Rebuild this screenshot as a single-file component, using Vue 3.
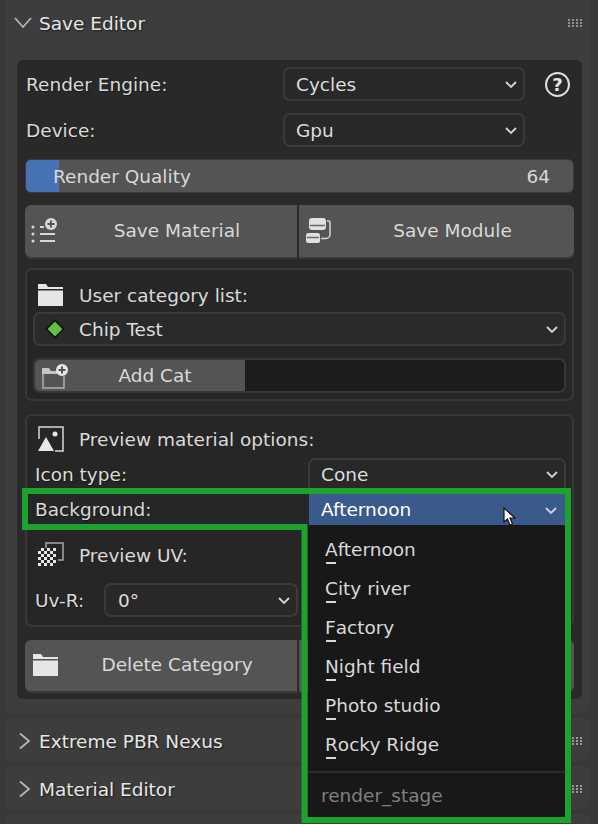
<script setup>
const menuItems = [
  ['A', 'fternoon'],
  ['C', 'ity river'],
  ['F', 'actory'],
  ['N', 'ight field'],
  ['P', 'hoto studio'],
  ['R', 'ocky Ridge'],
]
const collapsed = ['Extreme PBR Nexus', 'Material Editor']
</script>

<template>
  <div class="app">
    <section class="panel open">
      <header class="panel-head">
        <svg class="arrow" width="20" height="20" viewBox="0 0 20 20"><polyline points="2,5 10,14 18,5" /></svg>
        <span class="title">Save Editor</span>
        <svg class="grip" width="16" height="8" viewBox="0 0 16 8"><g fill="#8f8f8f"><rect v-for="n in 4" :key="n" :x="(n-1)*4" y="0" width="2" height="2"/><rect v-for="n in 4" :key="'b'+n" :x="(n-1)*4" y="3" width="2" height="2"/><rect v-for="n in 4" :key="'c'+n" :x="(n-1)*4" y="6" width="2" height="2"/></g></svg>
      </header>

      <div class="body">
        <div class="row">
          <span class="label w258">Render Engine:</span>
          <div class="select w242"><span>Cycles</span><svg class="chev" width="12" height="8" viewBox="0 0 12 8"><polyline points="1,1 6,6 11,1"/></svg></div>
          <span class="help">?</span>
        </div>
        <div class="row">
          <span class="label w258">Device:</span>
          <div class="select w242"><span>Gpu</span><svg class="chev" width="12" height="8" viewBox="0 0 12 8"><polyline points="1,1 6,6 11,1"/></svg></div>
        </div>

        <div class="slider">
          <div class="fill"></div>
          <span class="s-label">Render Quality</span>
          <span class="s-value">64</span>
        </div>

        <div class="btn-row">
          <div class="btn first">
            <svg class="btn-icon" width="26" height="30" viewBox="0 0 26 30">
              <g fill="#d8d8d8">
                <circle cx="2" cy="12" r="1.500"/><circle cx="2" cy="19" r="1.500"/><circle cx="2" cy="26" r="1.500"/>
                <rect x="9" y="11" width="4" height="2"/><rect x="9" y="18" width="15" height="2"/><rect x="9" y="25" width="15" height="2"/>
                <circle cx="20" cy="9" r="6"/>
              </g>
              <path d="M20 5.500v7M16.500 9h7" stroke="#545454" stroke-width="2"/>
            </svg>
            <span class="btn-text">Save Material</span>
          </div>
          <div class="btn second">
            <svg class="btn-icon" width="26" height="30" viewBox="0 0 26 30">
              <g fill="#e0e0e0">
                <rect x="3" y="3" width="17" height="12" rx="3"/>
                <rect x="0" y="18" width="14" height="10" rx="2.500"/>
              </g>
              <path d="M4 10.500h15M1 22.500h12" stroke="#6a6a6a" stroke-width="1.500"/>
              <path d="M21 6h1.500a1.500 1.500 0 0 1 1.500 1.500v12a4 4 0 0 1-4 4h-5" fill="none" stroke="#d8d8d8" stroke-width="1.500"/>
            </svg>
            <span class="btn-text">Save Module</span>
          </div>
        </div>

        <div class="box box-cat">
          <div class="box-head">
            <svg class="head-icon" width="26" height="24" viewBox="0 0 26 24"><path d="M0 1h8l2 3h15v2H0zM0 7.500h25V23H0z" fill="#e6e6e6"/></svg>
            <span>User category list:</span>
          </div>
          <div class="select full">
            <svg class="diamond" width="20" height="20" viewBox="0 0 20 20"><path d="M10 1.500L18.500 10L10 18.500L1.500 10z" fill="#62c23c" stroke="#0c0c0c" stroke-width="1.500"/></svg>
            <span class="grow">Chip Test</span>
            <svg class="chev" width="12" height="8" viewBox="0 0 12 8"><polyline points="1,1 6,6 11,1"/></svg>
          </div>
          <div class="add-row">
            <div class="btn add">
              <svg class="btn-icon" width="28" height="28" viewBox="0 0 28 28">
                <path d="M3 12V26H24V14" fill="none" stroke="#b0b0b0" stroke-width="1.500"/>
                <path d="M2 6h7l2 3h6v3H2z" fill="#c4c4c4"/>
                <circle cx="22" cy="8" r="6" fill="#e6e6e6"/>
                <path d="M22 4.500v7M18.500 8h7" stroke="#545454" stroke-width="2"/>
              </svg>
              <span class="btn-text">Add Cat</span>
            </div>
            <div class="add-rest"></div>
          </div>
        </div>

        <div class="box box-preview">
          <div class="box-head">
            <svg class="head-icon" width="26" height="26" viewBox="0 0 26 26">
              <path d="M1 13V1h24v24h-8" fill="none" stroke="#d8d8d8" stroke-width="1.500"/>
              <path d="M0 25L8 11L16 25z" fill="#e6e6e6"/>
              <circle cx="17" cy="8" r="2.500" fill="#e6e6e6"/>
            </svg>
            <span>Preview material options:</span>
          </div>
          <div class="row inner">
            <span class="label w275">Icon type:</span>
            <div class="select w258 cone"><span>Cone</span><svg class="chev" width="12" height="8" viewBox="0 0 12 8"><polyline points="1,1 6,6 11,1"/></svg></div>
          </div>
          <div class="row inner bg-row">
            <span class="label w275">Background:</span>
            <div class="select w256 active"><span>Afternoon</span><svg class="chev" width="12" height="8" viewBox="0 0 12 8"><polyline points="1,1 6,6 11,1"/></svg></div>
          </div>
          <div class="box-head uv-head">
            <svg class="head-icon" width="26" height="26" viewBox="0 0 26 26">
              <path d="M8 6V1h17v17h-5" fill="none" stroke="#a8a8a8" stroke-width="1.500"/>
              <g fill="#e6e6e6">
                <rect x="3" y="6" width="3" height="3"/><rect x="9" y="6" width="3" height="3"/><rect x="15" y="6" width="3" height="3"/>
                <rect x="0" y="9" width="3" height="3"/><rect x="6" y="9" width="3" height="3"/><rect x="12" y="9" width="3" height="3"/>
                <rect x="3" y="12" width="3" height="3"/><rect x="9" y="12" width="3" height="3"/><rect x="15" y="12" width="3" height="3"/>
                <rect x="0" y="15" width="3" height="3"/><rect x="6" y="15" width="3" height="3"/><rect x="12" y="15" width="3" height="3"/>
                <rect x="3" y="18" width="3" height="3"/><rect x="9" y="18" width="3" height="3"/><rect x="15" y="18" width="3" height="3"/>
                <rect x="0" y="21" width="3" height="3"/><rect x="6" y="21" width="3" height="3"/><rect x="12" y="21" width="3" height="3"/>
              </g>
            </svg>
            <span>Preview UV:</span>
          </div>
          <div class="row inner">
            <span class="label w71">Uv-R:</span>
            <div class="select w194 uv"><span>0°</span><svg class="chev" width="12" height="8" viewBox="0 0 12 8"><polyline points="1,1 6,6 11,1"/></svg></div>
          </div>
        </div>

        <div class="btn-row del">
          <div class="btn first">
            <svg class="btn-icon folder" width="26" height="24" viewBox="0 0 26 24"><path d="M0 1h8l2 3h15v2H0zM0 7.500h25V23H0z" fill="#e6e6e6"/></svg>
            <span class="btn-text">Delete Category</span>
          </div>
          <div class="btn second"></div>
        </div>
      </div>
    </section>

    <section v-for="name in collapsed" :key="name" class="panel closed">
      <svg class="arrow right" width="14" height="20" viewBox="0 0 14 20"><polyline points="2,2.500 11,10 2,17.500" /></svg>
      <span class="title">{{ name }}</span>
      <svg class="grip" width="11" height="8" viewBox="0 0 11 8"><g fill="#9a9a9a"><rect v-for="n in 3" :key="n" :x="(n-1)*4" y="0" width="2" height="2"/><rect v-for="n in 3" :key="'b'+n" :x="(n-1)*4" y="3" width="2" height="2"/><rect v-for="n in 3" :key="'c'+n" :x="(n-1)*4" y="6" width="2" height="2"/></g></svg>
    </section>
    <section class="panel stub"></section>

    <div class="menu">
      <div v-for="item in menuItems" :key="item[0]" class="menu-item">
        <span class="mn">{{ item[0] }}</span>{{ item[1] }}
      </div>
      <div class="sep"></div>
      <div class="menu-title">render_stage</div>
    </div>

    <svg class="outline" width="598" height="824" viewBox="0 0 598 824">
      <path d="M25 491H568V820H304.500V527H25z" fill="none" stroke="#1ca32e" stroke-width="6" />
    </svg>

    <svg class="cursor" width="14" height="20" viewBox="0 0 14 20">
      <path d="M1 1V15L4.500 12L7 18L9.500 17L7 11H12z" fill="#fff" stroke="#111" stroke-width="1.200"/>
    </svg>
  </div>
</template>

<style>
html, body { margin: 0; background: #383838; }
</style>

<style scoped>
.app {
  position: relative;
  width: 598px;
  height: 824px;
  overflow: hidden;
  background: #383838;
  font-family: "DejaVu Sans", sans-serif;
  font-size: 18.500px;
  color: #d9d9d9;
}
.panel {
  box-sizing: border-box;
  margin: 0 8px 0 5px;
  background: #3d3d3d;
  border-radius: 8px;
}
.panel.open {
  height: 713px;
  padding: 0 8px 0 12px;
  border-radius: 0 0 8px 8px;
  margin-bottom: 5px;
}
.panel-head {
  display: flex;
  align-items: center;
  height: 46px;
  margin-bottom: 14px;
}
.arrow {
  fill: none;
  stroke: #b5b5b5;
  stroke-width: 1.800;
  flex-shrink: 0;
  margin-left: -4px;
}
.title {
  margin-left: 6px;
  flex: 1;
  font-size: 18.500px;
  color: #e6e6e6;
  text-shadow: 1px 1px 2px rgba(0,0,0,.6);
}
.grip { flex-shrink: 0; }
.panel-head .grip { margin-right: -2px; }
.body {
  box-sizing: border-box;
  height: 639px;
  padding: 7px 8px;
  background: #292929;
  border-radius: 6px;
  display: flex;
  flex-direction: column;
  gap: 12px;
}
.row {
  display: flex;
  align-items: center;
  height: 34px;
}
.label { flex-shrink: 0; padding-left: 1px; box-sizing: border-box; text-shadow: 1px 1px 1px rgba(0,0,0,.4); }
.w258 { width: 258px; }
.w275 { width: 275px; padding-left: 2px; }
.w71 { width: 71px; padding-left: 2px; }
.select {
  box-sizing: border-box;
  display: flex;
  align-items: center;
  justify-content: space-between;
  height: 34px;
  padding: 0 6px 0 11px;
  background: #282828;
  border: 2px solid #3a3a3a;
  border-radius: 7px;
  color: #dcdcdc;
}
.w242 { width: 242px; }
.w258.select { width: 258px; }
.w256 { width: 256px; }
.w194 { width: 194px; }
.full { width: 533px; padding-left: 10px; background: #2a2a2a; }
.chev { fill: none; stroke: #d4d4d4; stroke-width: 1.800; flex-shrink: 0; margin-top: 2px; }
.grow { flex: 1; }
.diamond { margin-right: 14px; flex-shrink: 0; }
.help {
  box-sizing: border-box;
  width: 25px;
  height: 25px;
  margin-left: 20px;
  border: 2px solid #e0e0e0;
  border-radius: 50%;
  display: flex;
  align-items: center;
  justify-content: center;
  font-size: 18px;
  font-weight: 700;
  color: #e6e6e6;
}
.slider {
  position: relative;
  box-sizing: border-box;
  display: flex;
  align-items: center;
  justify-content: space-between;
  height: 34px;
  padding: 0 23px 0 27px;
  background: #545454;
  border: 1px solid #3a3a3a;
  border-radius: 6px;
  overflow: hidden;
}
.fill {
  position: absolute;
  left: 0;
  top: 0;
  bottom: 0;
  width: 33px;
  background: #4772b3;
}
.s-label, .s-value { position: relative; }
.btn-row {
  display: flex;
  height: 52px;
  gap: 2px;
}
.btn {
  box-sizing: border-box;
  display: flex;
  align-items: center;
  background: #545454;
  box-shadow: 0 2px 0 #3a3a3a;
  padding-bottom: 2px;
}
.first { width: 272px; flex-shrink: 0; border-radius: 6px 0 0 6px; }
.second { flex: 1; border-radius: 0 6px 6px 0; }
.btn-icon { flex-shrink: 0; margin-left: 6px; }
.second .btn-icon { margin-left: 7px; margin-right: -1px; }
.folder { margin-left: 8px; margin-right: -2px; }
.btn-text { flex: 1; text-align: center; }
.box {
  box-sizing: border-box;
  padding: 0 6px;
  background: #262626;
  border: 2px solid #383838;
  border-radius: 7px;
}
.box-cat { height: 133px; margin-top: -1px; }
.box-preview { height: 213px; margin-top: 1px; }
.del { margin-top: 1px; height: 51px; }
.box-head {
  box-sizing: border-box;
  display: flex;
  align-items: center;
  height: 42px;
  padding-left: 5px;
}
.box-cat .box-head { padding-top: 8px; }
.box-preview > .box-head:first-child { padding-top: 4px; }
.head-icon { flex-shrink: 0; margin-right: 15px; }
.add-row {
  display: flex;
  height: 35px;
  margin-top: 12px;
  background: #1c1c1c;
  border: 2px solid #383838;
  border-radius: 7px;
  box-sizing: border-box;
  overflow: hidden;
}
.add { width: 210px; flex-shrink: 0; box-shadow: none; padding-bottom: 0; }
.add .btn-icon { margin-left: 5px; margin-right: -3px; }
.add-rest { flex: 1; }
.inner { height: 32px; }
.inner .select { height: 32px; }
.cone { height: 38px !important; align-self: flex-start; padding-bottom: 6px; }
.bg-row { margin-top: 4px; }
.bg-row .label { padding-bottom: 1px; }
.active {
  background: #3b5a8c;
  border: none;
  border-radius: 0;
  padding: 0 8px 1px 12px;
  color: #fff;
  margin-left: 1px;
}
.uv-head { height: 58px; margin-top: 0; }
.uv { height: 34px !important; padding-left: 12px; }
.menu {
  position: absolute;
  left: 308px;
  top: 525px;
  width: 257px;
  height: 293px;
  box-sizing: border-box;
  padding: 5px 0 0 17px;
  background: #181818;
}
.menu-item {
  height: 39px;
  line-height: 39px;
  color: #d9d9d9;
}
.mn { position: relative; }
.mn::after {
  content: "";
  position: absolute;
  left: 1px;
  bottom: -4px;
  width: 10px;
  height: 2px;
  background: #d9d9d9;
}
.sep {
  height: 2px;
  margin: 7px 0 0 -17px;
  background: #2c2c2c;
}
.menu-title {
  height: 46px;
  line-height: 46px;
  color: #808080;
  margin-left: -4px;
}
.closed {
  display: flex;
  align-items: center;
  height: 43px;
  margin-bottom: 5px;
  padding: 3px 7px 0 13px;
}
.arrow.right { margin-left: 0; }
.closed .title { margin-left: 7px; }
.stub { height: 30px; }
.outline { position: absolute; left: 0; top: 0; pointer-events: none; }
.cursor { position: absolute; left: 503px; top: 507px; }
</style>
